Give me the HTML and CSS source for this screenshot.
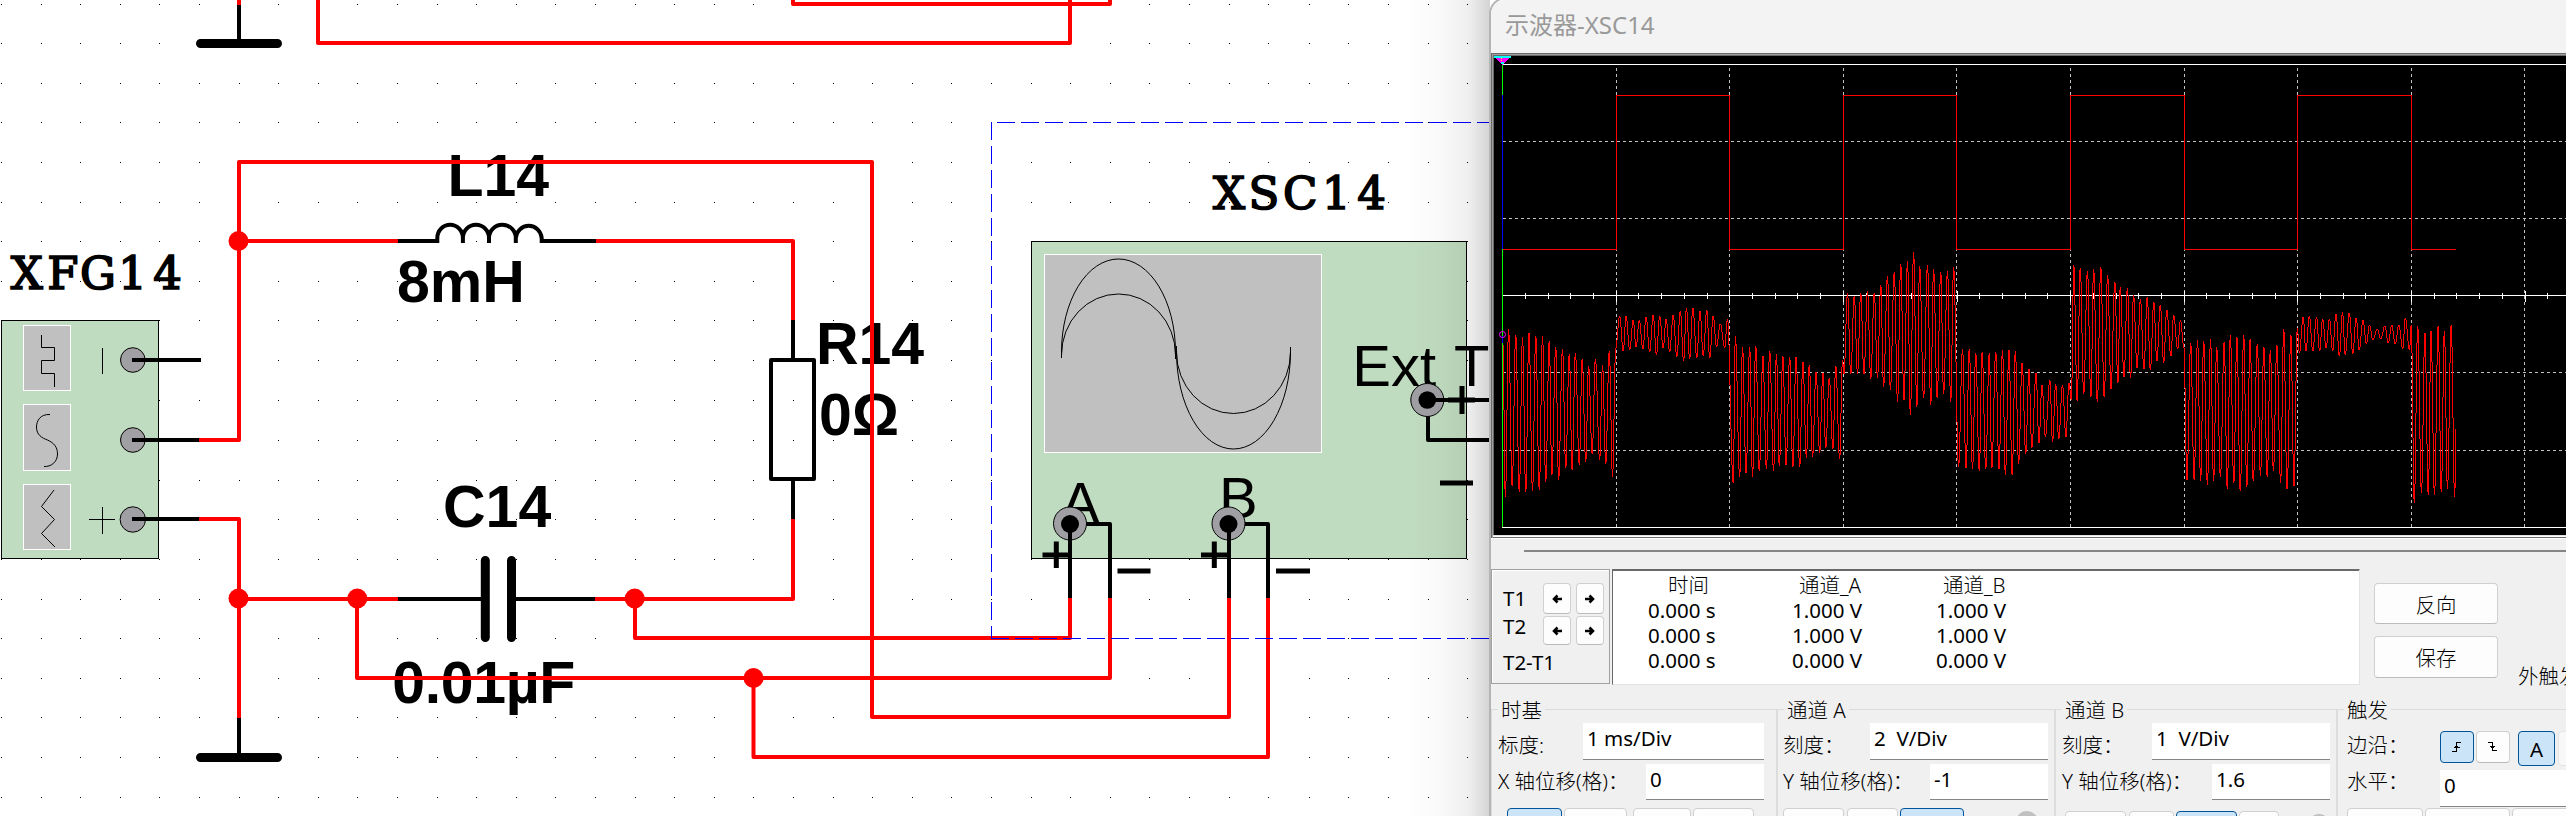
FILE: index.html
```html
<!DOCTYPE html>
<html lang="zh-CN">
<head>
<meta charset="utf-8">
<title>示波器-XSC14</title>
<link rel="stylesheet" href="styles.css">
</head>
<body>
<main class="desktop">
<svg class="schematic" width="2566" height="816" viewBox="0 0 2566 816">
  <defs>
    <linearGradient id="shade" x1="0" x2="1" y1="0" y2="0">
      <stop offset="0" stop-color="#000" stop-opacity="0"/>
      <stop offset=".4" stop-color="#000" stop-opacity=".02"/>
      <stop offset=".75" stop-color="#000" stop-opacity=".065"/>
      <stop offset="1" stop-color="#000" stop-opacity=".17"/>
    </linearGradient>
  </defs>
  <path id="dots" class="dots"/>

  <!-- function generator -->
  <rect class="instrument" x="1.5" y="320.5" width="157" height="238"/>
  <rect class="screen" x="23.5" y="325.500" width="47" height="65"/>
  <rect class="screen" x="23.5" y="404.500" width="47" height="66"/>
  <rect class="screen" x="23.5" y="484.500" width="47" height="65"/>
  <path class="thin" d="M41.500 335V347.500H54.500V360.500H41.500V373.500H54.500V387"/>
  <path class="thin" d="M50 414.500C40 414 36.500 421 36.500 427C36.500 435 42 438 47.500 440C54 443 57.500 447 57.500 454C57.500 462 51 467 44 466.500"/>
  <path class="thin" d="M54 490L41.500 506.500L54.500 519.500L41.500 533.500L55 547"/>
  <path class="thin crisp" d="M102.500 348V374M89 519.500H115M102.500 507V534"/>
  <circle class="pin" cx="132.800" cy="360" r="12.300"/>
  <circle class="pin" cx="132.800" cy="440" r="12.300"/>
  <circle class="pin" cx="132.800" cy="519.500" r="12.700"/>

  <!-- oscilloscope symbol -->
  <rect class="instrument" x="1031.500" y="241.500" width="435" height="317"/>
  <rect class="screen" x="1044.500" y="254.500" width="277" height="198"/>
  <path class="thin" d="M1061.500 358V352A57 93 0 0 1 1175.500 352V359M1061.500 355A57 61 0 0 1 1175.500 355M1176.500 346V352A57 97 0 0 0 1290.500 352V347M1176.500 352A57 61.500 0 0 0 1290.500 352"/>

  <g class="label">
    <text x="447.500" y="196">L14</text>
    <text x="397" y="302">8mH</text>
    <text x="816" y="363.500" textLength="108">R14</text>
    <text x="819" y="435">0Ω</text>
    <text x="443" y="526.700">C14</text>
    <text x="392.300" y="702.700" textLength="183">0.01µF</text>
  </g>
  <g class="mono">
    <text x="26.800 62.800 98 132.500 167.500" y="288.500">XFG14</text>
    <text x="1229 1264 1300.300 1336.300 1371.500" y="209">XSC14</text>
  </g>
  <g class="port">
    <text x="1352.300" y="385.700">Ext <tspan x="1454">Trig</tspan></text>
    <text x="1061" y="522.700">A</text>
    <text x="1219" y="518.300">B</text>
  </g>
  <path class="sign" d="M1448 400H1475M1462 386V414M1440 483H1473M1042.500 555H1069M1056.300 541.500V568M1201 555H1228M1214.300 541.500V568M1117.500 571H1150.500M1276 571H1310"/>

  <!-- component leads and bodies -->
  <path class="lead" d="M239 5V40M239 718V755M132 360H201M132 440H199M132 519H199"/>
  <path class="lead butt" d="M398 241H439M437.300 243V238A12.800 13.300 0 0 1 462.900 238V243M462.900 243V238A13 13.300 0 0 1 489 238V243M489 243V238A13.400 13.300 0 0 1 515.800 238V243M515.800 243V238A13 13.300 0 0 1 541.700 238V243M540 241H596"/>
  <path class="lead butt" d="M793 320V360M793 480V520M398 599H485M512 599H596"/>
  <rect class="lead" x="771" y="360" width="43" height="119"/>
  <path class="plate" d="M200.500 43.500H277.500M200.500 757.500H277.500M485.300 560.500V637.500M511.500 560.500V637.500"/>
  <path class="lead" d="M1070 524H1110V598M1228 524H1268V598M1427 400H1491M1428 400V440H1491"/>
  <circle class="pin" cx="1070" cy="523.500" r="16.500"/>
  <circle class="pin" cx="1228.500" cy="523.500" r="16.500"/>
  <circle class="pin" cx="1427.300" cy="400" r="16.500"/>
  <circle cx="1070" cy="524" r="9"/><circle cx="1228.500" cy="524" r="9"/><circle cx="1427.300" cy="400" r="8.800"/>
  <path class="lead" d="M1070 524V598M1229 524V598M1427 400H1491"/>

  <!-- wires -->
  <path class="wire" d="M239 -4V5M318 -4V43H1070V-4M793 -4V4H1110V-4"/>
  <path class="wire" d="M199 440H239V162H872V717H1229V598M239 241H398M596 241H793V320M793 519V599H595M199 519H239V718M239 599H398M357 599V678H1110V598M635 599V638H1070V598M753.500 678V757H1268V598"/>
  <g class="node">
    <circle cx="238.500" cy="241" r="10"/><circle cx="238.500" cy="598.500" r="10"/>
    <circle cx="357.300" cy="598.500" r="10"/><circle cx="634.700" cy="598.500" r="10"/>
    <circle cx="753.500" cy="678" r="10"/>
  </g>
  <path class="select" d="M991.500 122V638.500"/>
  <path class="select" d="M991 638.500H1492"/>
  <path class="select" d="M997 122.500H1492"/>
  <rect x="1404" y="0" width="86" height="816" fill="url(#shade)"/>
</svg>

<section class="window">
  <header class="titlebar">示波器-XSC14</header>
  <div class="scope">
    <svg class="plot" width="1074" height="479" viewBox="1494 56 1074 479">
      <path class="grid" d="M1503 141.500H2568M1503 218.500H2568M1503 372.500H2568M1503 450.500H2568"/>
      <path class="grid" d="M1616.500 68V527M1729.500 68V527M1843.500 68V527M1956.500 68V527M2070.500 68V527M2184.500 68V527M2297.500 68V527M2411.500 68V527M2524.500 68V527"/>
      <path class="frame" d="M1503 64.500H2568M1502 527.500H2568M1503 295.500H2568"/>
      <path id="ticks" class="frame"/>
      <path class="cursor-green" d="M1502.500 64V527"/>
      <path class="cursor-blue" d="M1502.500 95V249M1502.500 336V343"/>
      <path class="trace" d="M1503 249.500H1616.500V95.500H1729.500V249.500H1843.500V95.500H1956.500V249.500H2070.500V95.500H2184.500V249.500H2297.500V95.500H2411.500V249.500H2456"/>
      <path id="ringing" class="trace"/>
      <path class="marker-pink" d="M1495 57H1510L1503 64.500H1502Z"/>
      <path class="marker-cyan" d="M1494 56.700H1511M1501 62.500H1504"/>
      <path class="marker-yellow" d="M1501.500 58V62"/>
      <circle class="origin" cx="1502.500" cy="334.500" r="3"/>
    </svg>
  </div>
  <div class="scrollbar"></div>

  <div class="readout">
    <div class="cursors">
      <span>T1</span><button class="btn"><svg width="10" height="10" viewBox="0 0 10 10"><path d="M10 5H3M5.500 1.500L2 5L5.500 8.500"/></svg></button><button class="btn"><svg width="10" height="10" viewBox="0 0 10 10"><path d="M0 5H7M4.500 1.500L8 5L4.500 8.500"/></svg></button>
      <span>T2</span><button class="btn low"><svg width="10" height="10" viewBox="0 0 10 10"><path d="M10 5H3M5.500 1.500L2 5L5.500 8.500"/></svg></button><button class="btn low"><svg width="10" height="10" viewBox="0 0 10 10"><path d="M0 5H7M4.500 1.500L8 5L4.500 8.500"/></svg></button>
      <span class="delta">T2-T1</span>
    </div>
    <div class="values">
      <div class="col time"><b>时间</b><span>0.000 s</span><span>0.000 s</span><span>0.000 s</span></div>
      <div class="col"><b>通道_A</b><span>1.000 V</span><span>1.000 V</span><span>0.000 V</span></div>
      <div class="col"><b>通道_B</b><span>1.000 V</span><span>1.000 V</span><span>0.000 V</span></div>
    </div>
    <div class="actions"><button class="btn wide">反向</button><button class="btn wide save">保存</button></div>
    <div class="external">外触发</div>
  </div>

  <div class="groups">
    <section class="group timebase">
      <h2>时基</h2>
      <div class="field"><label>标度:</label><span class="input w181">1 ms/Div</span></div>
      <div class="field second"><label>X 轴位移(格)：</label><span class="input w118">0</span></div>
      <div class="modes"><i class="on w55"></i><i class="w63"></i><i class="w58 gap5"></i><i class="w61"></i></div>
    </section>
    <section class="group channel">
      <h2>通道 A</h2>
      <div class="field"><label>刻度：</label><span class="input w178">2&nbsp; V/Div</span></div>
      <div class="field second"><label>Y 轴位移(格)：</label><span class="input w118">-1</span></div>
      <div class="modes"><i class="w61"></i><i class="w51 gap3"></i><i class="on w64"></i><i class="dot"></i></div>
    </section>
    <section class="group channel-b">
      <h2>通道 B</h2>
      <div class="field"><label>刻度：</label><span class="input w178">1&nbsp; V/Div</span></div>
      <div class="field second"><label>Y 轴位移(格)：</label><span class="input w118">1.6</span></div>
      <div class="modes lower"><i class="w61"></i><i class="w45 gap3"></i><i class="on w61"></i><i class="w40"></i><i class="dot"></i></div>
    </section>
    <section class="group trigger">
      <h2>触发</h2>
      <div class="field"><label>边沿：</label>
        <div class="edges">
          <button class="btn edge on"><svg width="10" height="12" viewBox="0 0 10 12"><path d="M0 10.500H4.500V1.500H9M1.500 6.500H7.500M3 5.500H6"/></svg></button>
          <button class="btn edge"><svg width="10" height="12" viewBox="0 0 10 12"><path d="M0 1.500H4.500V9.500H9M2 5.500H7M3 6.500H6"/></svg></button>
          <button class="btn source on">A</button>
          <button class="btn source next"></button>
        </div>
      </div>
      <div class="field second level"><label>水平：</label><span class="input w130">0</span></div>
      <div class="modes high"><i class="w76"></i><i class="w85"></i><i class="w76"></i></div>
    </section>
  </div>
</section>
</main>
<script src="plot.js"></script>
</body>
</html>
```
FILE: styles.css
```css
* { box-sizing: border-box; }
body { margin: 0; background: #fff; overflow: hidden; font-family: "Noto Sans", "Noto Sans CJK SC", sans-serif; }
.desktop { position: relative; width: 2566px; height: 816px; overflow: hidden; }
.schematic { display: block; }
.dots { fill: #000; shape-rendering: crispEdges; }
.instrument { fill: #c0dcc0; stroke: #000; }
.screen { fill: #c0c0c0; stroke: #fff; }
.thin { fill: none; stroke: #000; }
.crisp { shape-rendering: crispEdges; }
.pin { fill: #a0a0a4; stroke: #000; }
.label { font: bold 59px "Liberation Sans", Arial, sans-serif; }
.mono { font: 45px "DejaVu Serif", serif; text-anchor: middle; stroke: #000; stroke-width: 1.7px; }
.port { font: 58px "Liberation Sans", Arial, sans-serif; }
.sign { stroke: #000; stroke-width: 5; }
.lead { fill: none; stroke: #000; stroke-width: 4; stroke-linejoin: round; }
.plate { stroke: #000; stroke-width: 9; stroke-linecap: round; }
.wire { fill: none; stroke: #f00; stroke-width: 4; stroke-linejoin: round; }
.node { fill: #f00; }
.select { fill: none; stroke: #00f; stroke-dasharray: 18 6; shape-rendering: crispEdges; }

.window { position: absolute; left: 1489px; top: -3px; width: 1100px; height: 840px; border: 2px solid #b4b4b4; border-radius: 17px 0 0 0; background: #f0f0f0; overflow: hidden; font-size: 20.500px; }
.titlebar { height: 54px; padding: 9px 0 0 14px; background: #f3f3f3; color: #999; font-size: 24px; line-height: 33px; }
.scope { height: 486px; padding: 3px 0 0 3px; background: #696969; border-bottom: 1px solid #fff; box-shadow: inset 1px 1px #696969, inset 2px 2px #a0a0a0, inset 0 -1px #696969, inset 0 -2px #fff, inset 0 -3px #e3e3e3; }
.plot { display: block; background: #000; }
.plot path { shape-rendering: crispEdges; fill: none; }
.grid { stroke: #c0c0c0; stroke-dasharray: 3 3; }
.frame { stroke: #fff; }
.cursor-green { stroke: #0f0; }
.cursor-blue { stroke: #00f; }
.trace { stroke: #f00; }
.plot .marker-pink { fill: #f0f; }
.marker-cyan { stroke: #0ff; stroke-width: 2; }
.marker-yellow { stroke: #ff0; stroke-dasharray: 1 1; }
.origin { fill: none; stroke: #f0f; }
.scrollbar { height: 2px; margin: 11px 0 0 33px; background: #858585; }

.readout { display: flex; height: 116px; margin-top: 17px; }
.readout > * { flex: none; }
.cursors { display: grid; grid-template: 31px 32px 34px / 35px 28px 28px; column-gap: 5px; row-gap: 1px; width: 119px; height: 115px; padding: 13px 0 0 11px; border: 1px solid #a0a0a0; box-shadow: inset 1px 1px #fff; }
.cursors > span { line-height: 30px; }
.cursors > span:nth-of-type(2) { line-height: 23px; }
.cursors .delta { grid-column: 1 / 4; line-height: 29px; }
.btn { display: flex; align-items: center; justify-content: center; padding: 0; height: 31px; border: 1px solid #d0d0d0; border-bottom-color: #bbb; border-radius: 4px; background: #fdfdfd; color: #000; font: inherit; }
.btn.low { height: 29px; margin-top: 1px; }
.btn svg path { fill: none; stroke: #000; stroke-width: 2.500; }
.values { display: flex; width: 748px; height: 116px; margin-left: 2px; background: #fff; border: solid; border-width: 1px; border-color: #696969 #e3e3e3 #e3e3e3 #696969; box-shadow: inset 0 1px #696969; padding: 2px 0 0 33px; }
.col { display: flex; flex-direction: column; flex: none; width: 144px; line-height: 25px; }
.col b { font-weight: 300; line-height: 26px; padding-left: 9px; white-space: nowrap; }
.col.time b { padding-left: 22px; }
.col span { padding-left: 2px; }
.actions { margin: 14px 0 0 14px; font-weight: 300; }
.wide { width: 124px; height: 41px; }
.save { margin-top: 12px; height: 42px; }
.external { margin: 92px 0 0 20px; white-space: nowrap; line-height: 30px; font-weight: 300; }

.groups { display: flex; margin-top: 24px; font-weight: 300; }
.group { position: relative; flex: none; height: 140px; border: 1px solid #dcdcdc; padding: 13px 0 0 6px; }
.timebase { width: 286px; }
.channel { width: 278px; padding-left: 5px; }
.channel-b { width: 282px; padding-left: 6px; }
.trigger { width: 300px; padding-left: 9px; }
.group h2 { position: absolute; left: 6px; top: -15px; margin: 0; padding: 0 3px; background: #f0f0f0; font-size: 20.500px; font-weight: 300; line-height: 30px; }
.field { display: flex; justify-content: space-between; height: 37px; padding-right: 12px; line-height: 44px; white-space: nowrap; }
.channel .field, .channel-b .field { padding-right: 6px; }
.trigger .field { padding-right: 0; }
.field.second { margin-top: 4px; height: 36px; line-height: 35px; }
.input { height: 37px; padding-left: 4px; background: #fff; border-bottom: 1px solid #858585; font-weight: 400; line-height: 30px; }
.second .input { height: 36px; line-height: 31px; }
.w181 { width: 181px; }
.w178 { width: 178px; }
.w118 { width: 118px; }
.trigger .w130 { flex: none; width: 196px; }
.level .input { margin-top: 6px; height: 37px; line-height: 30px; }
.edges { display: flex; flex: none; width: 196px; padding-top: 8px; line-height: 24px; }
.edges > * { flex: none; }
.edge { width: 34px; height: 32px; margin-right: 2px; }
.btn.edge svg path { stroke-width: 1; shape-rendering: crispEdges; }
.on { border: 1px solid #005499 !important; background: #cce4f7 !important; }
.source { width: 37px; height: 35px; margin-left: 6px; font-weight: 400; }
.next { margin-left: 3px; background: #f8f8f8; border-color: #e4e4e4; }
.modes { display: flex; gap: 2px; padding-left: 9px; margin-top: 8px; }
.channel .modes, .channel-b .modes, .trigger .modes { padding-left: 0; }
.channel-b .modes.lower { margin-top: 11px; padding-left: 3px; }
.modes i { height: 30px; border: 1px solid #d0d0d0; border-radius: 4px; background: #fdfdfd; flex: none; }
.modes .dot { width: 22px; height: 22px; margin: 3px 0 0 50px; border: 0; border-radius: 50%; background: #c0c0c0; }
.modes.lower .dot { margin-left: 27px; }
.w55 { width: 55px; } .w63 { width: 63px; } .w58 { width: 58px; } .w61 { width: 61px; }
.w51 { width: 51px; } .w64 { width: 64px; } .w45 { width: 45px; } .w40 { width: 40px; }
.w76 { width: 76px; } .w85 { width: 85px; }
.gap5 { margin-left: 4px; } .gap3 { margin-left: 1px; }
```
FILE: plot.js
```js
// Sheet grid dots
const cols = [1,41,80,120,159,199,239,278,318,357,397,437,476,516,555,595,635,674,714,753,793,833,872,912,951,991,1031,1070,1110,1149,1189,1229,1268,1309,1348,1388,1428,1467];
const rows = [4,43,83,122,162,202,241,281,320,360,400,440,480,519,559,599,638,678,717,757,797];
let dots = "";
for (const y of rows) for (const x of cols) dots += `M${x} ${y}h1v1h-1z`;
document.getElementById("dots").setAttribute("d", dots);

// Ticks on the time axis, five per division
let ticks = "";
for (let i = 1; i < 47; i++) {
  const x = Math.floor(1502.6 + i * 22.72) + 0.5;
  ticks += i % 5 ? `M${x} 293V299` : `M${x} 291V302`;
}
document.getElementById("ticks").setAttribute("d", ticks);

// Turning points of the ringing signal, x,y pairs
const early = [64,310,71,770,80,267,90,738,100,285,110,755,119,291,128,755,137,279,147,752,156,288,166,749,175,288,184,725,194,303,201,705,212,321,220,719,231,327,240,684,250,342,258,689,267,339,278,674,286,357,296,665,304,378,314,641,323,357,335,659,343,375,352,671,362,333,371,710,
  380,324,391,228,401,333,409,228,419,330,429,240,437,321,446,240,456,327,465,231,475,335,485,225,494,345,503,228,513,324,521,237,531,335,541,225,551,350,561,213,570,362,578,204,587,356,596,204,607,353,616,213,625,347,635,210,643,353,653,228,662,320,673,252,685,323,693,237,
  709,728,715,288,727,710,735,321,745,698,755,321,763,710,772,318,782,692,792,348,802,686,811,333,822,692,830,342,838,677,848,348,857,674,867,351,876,680,885,351,895,680,904,366,914,653,922,375,931,650,941,396,951,638,960,399,968,623,978,414,988,626,996,378,1007,656,1015,360,
  1019,403,1029,159,1038,403,1048,168,1057,401,1066,159,1075,403,1085,153,1094,416,1104,159,1113,413,1122,135,1130,440,1141,108,1149,449,1160,96,1169,485,1178,72,1187,480,1197,63,1205,524,1214,36,1223,500,1231,78,1242,473,1253,75,1262,494,1270,87,1280,473,1290,96,1298,461,1309,93,1318,485,1326,81,
  1340,680,1351,327,1361,683,1370,327,1379,686,1388,339,1398,692,1406,336,1416,686,1426,339,1433,683,1444,336,1453,686,1463,330,1471,704,1481,330,1490,704,1499,333,1508,671,1518,369,1528,641,1537,388,1545,623,1557,399,1565,608];
const late = [35,1078,45,1223,58,1064,66,1237,75,1075,84,1229,95,1078,105,1223,114,1072,
  121,1120,128,742,138,1123,147,750,157,1103,168,759,178,1112,186,753,197,1126,207,748,217,1112,227,770,237,1088,248,790,257,1072,264,804,275,1055,285,806,294,1058,303,826,313,1030,323,837,333,1033,343,832,352,1036,362,846,371,1011,381,854,391,1016,400,868,412,997,420,882,432,977,440,896,450,972,
  459,1343,470,960,480,1343,490,952,499,1347,508,955,519,1357,528,949,537,1347,546,972,557,1335,568,958,577,1369,586,938,596,1352,605,944,615,1375,625,938,634,1363,644,949,653,1347,665,963,674,1333,684,972,694,1335,703,980,712,1319,722,966,733,1352,742,921,752,1369,763,938,772,1361,
  782,918,788,988,799,888,807,983,817,885,827,983,838,888,847,983,856,893,866,974,876,893,885,983,895,879,905,997,914,874,922,994,934,876,944,991,954,890,963,980,974,896,984,963,993,910,1003,952,1016,921,1026,949,1038,913,1048,960,1058,910,1068,963,1079,910,1090,977,1098,890,1110,980,1115,910,
  1124,1408,1134,913,1145,1380,1155,932,1165,1386,1173,927,1183,1386,1194,913,1203,1378,1212,927,1221,1369,1232,910,1242,1391,1247,1184];
const turns = [];
for (let i = 0; i < early.length; i += 2) turns.push([1480 + early[i] / 2.8, 240 + early[i + 1] / 3]);
for (let i = 0; i < late.length; i += 2) turns.push([2030 + late[i] / 2.925, late[i + 1] / 2.8]);

// One vertical run per pixel column, following a half cosine between turning points
let run = "";
const level = x => {
  let k = 0;
  while (k < turns.length - 2 && turns[k + 1][0] <= x) k++;
  const [x0, y0] = turns[k], [x1, y1] = turns[k + 1];
  const t = Math.min(1, Math.max(0, (x - x0) / (x1 - x0)));
  return y0 + (y1 - y0) * (1 - Math.cos(Math.PI * t)) / 2;
};
for (let x = 1503; x < 2456; x++) {
  const ys = [level(x), level(x + 1)];
  for (const [tx, ty] of turns) if (tx >= x && tx < x + 1) ys.push(ty);
  const a = Math.round(Math.min(...ys)), b = Math.max(a + 1, Math.round(Math.max(...ys)));
  run += `M${x + 0.5} ${a}V${b}`;
}
document.getElementById("ringing").setAttribute("d", run);
```
